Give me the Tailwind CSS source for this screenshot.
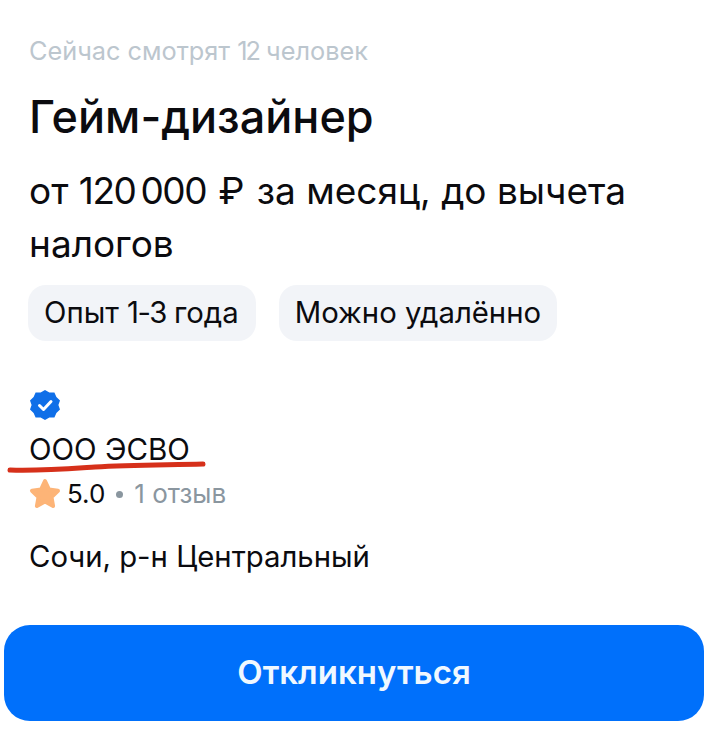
<!DOCTYPE html>
<html lang="ru">
<head>
    <meta charset="UTF-8">
    <title>Гейм-дизайнер</title>
    <script src="https://cdn.jsdelivr.net/npm/@tailwindcss/browser@4"></script>
</head>
<body class="bg-white">
    <div class="relative w-[715px] h-[735px] overflow-hidden font-['Inter','Noto_Sans',sans-serif] text-[#0b0b0f]">
        <div class="pl-[29px] pt-[36px]">
            <p class="text-[25.300px] leading-[30px] text-[#bcc6ce]">Сейчас смотрят <span class="tracking-[-2px]">12</span> человек</p>
            <h1 class="mt-[24px] text-[45px] leading-[54px] font-medium">Гейм-дизайнер</h1>
            <p class="mt-[20px] w-[650px] text-[37px] leading-[53px]">от <span class="tracking-[-1.500px]">120&#8201;000</span> <span class="mx-[2px]">₽</span> за месяц, до вычета налогов</p>
            <div class="mt-[15px] -ml-px flex gap-[23px]">
                <span class="h-[56px] pl-[16px] pr-[17px] flex items-center rounded-[18px] bg-[#f2f4f8] text-[29.300px] whitespace-pre">Опыт <span class="tracking-[-1.500px]">1-3</span> года</span>
                <span class="h-[56px] px-[16px] flex items-center rounded-[18px] bg-[#f2f4f8] text-[29.300px]">Можно удалённо</span>
            </div>
            <svg class="mt-[48px]" width="32" height="32" viewBox="0 0 32 32">
                <path fill="#0f6fe8" d="M16 1l4.400 2.600 5-.2 2 4.600 3.600 3.400L29.400 16l1.600 4.600-3.600 3.400-2 4.600-5-.2L16 31l-4.400-2.600-5 .2-2-4.600L1 20.600 2.600 16 1 11.400 4.600 8l2-4.600 5 .2z"/>
                <path fill="none" stroke="#fff" stroke-width="3" stroke-linecap="round" stroke-linejoin="round" d="M10.500 16.500l4 4 7.500-8"/>
            </svg>
            <p class="mt-[10px] text-[29.500px] leading-[36px]">ООО ЭСВО</p>
            <div class="mt-[10px] flex items-center text-[26px] leading-[32px]">
                <svg class="-ml-px mr-[5px]" width="34" height="34" viewBox="0 0 34 34">
                    <path fill="#fdb477" stroke="#fdb477" stroke-width="4" stroke-linejoin="round" d="M17 4l4 8.500 9 1.200-6.500 6.300 1.600 9L17 24.600 8.900 29l1.600-9L4 13.700l9-1.200z"/>
                </svg>
                <span>5.0</span>
                <span class="mx-[11px] w-[7px] h-[7px] rounded-full bg-[#8a969f]"></span>
                <span class="text-[#8a969f]">1 отзыв</span>
            </div>
            <p class="mt-[28px] text-[29.300px] leading-[36px]">Сочи, р-н Центральный</p>
        </div>
        <button class="absolute left-[4px] top-[625px] w-[700px] h-[96px] rounded-[26px] bg-[#0070fb] text-[#f0f8ff] text-[33px] font-semibold">Откликнуться</button>
        <svg class="absolute left-0 top-0 pointer-events-none" width="715" height="735" viewBox="0 0 715 735">
            <path fill="none" stroke="#d6301a" stroke-width="5" stroke-linecap="round" d="M10 470c30 1 55-1 85-3 35-2 70-2 108-3"/>
        </svg>
    </div>
</body>
</html>
